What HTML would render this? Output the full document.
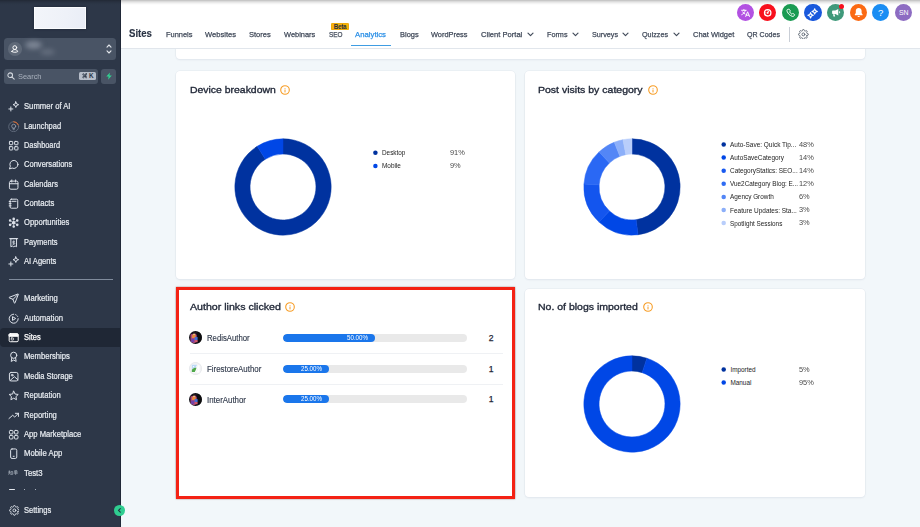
<!DOCTYPE html>
<html>
<head>
<meta charset="utf-8">
<title>Sites - Analytics</title>
<style>
*{box-sizing:border-box;margin:0;padding:0}
html,body{width:920px;height:527px;overflow:hidden;background:#f2f7fa;font-family:"Liberation Sans",sans-serif;}
body{position:relative}
.abs{position:absolute}
/* ---------- sidebar ---------- */
#side{position:absolute;left:0;top:0;width:120.7px;height:527px;background:#2d3748;overflow:hidden;z-index:4;border-right:.9px solid #202837}
#logo{position:absolute;left:34.2px;top:7.4px;width:51.9px;height:21.6px;background:linear-gradient(100deg,#f3f5fa 0%,#eef1f8 60%,#e9edf6 100%);box-shadow:inset 0 0 0 .7px #fff,0 0 2.5px rgba(10,15,30,.45)}
#acct{position:absolute;left:4.1px;top:37.9px;width:112.1px;height:22px;border-radius:3.5px;background:#495465}
#acct .av{position:absolute;left:4.1px;top:4.3px;width:13.6px;height:13.6px;border-radius:50%;background:#5f6978}
#search{position:absolute;left:4.1px;top:68.5px;width:94px;height:15.3px;border-radius:3px;background:#495465}
#search .t{position:absolute;left:13.6px;top:3.1px;font-size:7.8px;color:#aab2be;line-height:10px;transform-origin:0 50%;transform:scaleX(.95)}
#search .k{position:absolute;left:75.4px;top:3.3px;width:16.3px;height:8.7px;border-radius:1.5px;background:#b6bdc9;font-size:6.4px;font-weight:bold;color:#2d3748;line-height:8.9px;text-align:center;letter-spacing:.1px;white-space:nowrap}
#bolt{position:absolute;left:101.2px;top:68.5px;width:15px;height:15.3px;border-radius:3px;background:#495465}
.mi{position:absolute;left:0;width:120px;height:19px}
.mi.act{background:#1f2735;border-radius:4px 0 0 4px}
.mi span{transform-origin:0 50%;position:absolute;left:23.7px;top:4.5px;font-size:8.3px;line-height:10px;color:#e9edf2;white-space:nowrap;-webkit-text-stroke:.2px #e9edf2}
.mi svg{position:absolute;left:8.2px;top:4.6px;width:11.4px;height:11.4px;fill:none;stroke:#dde2ea;stroke-width:2.1;stroke-linecap:round;stroke-linejoin:round}
#sfoot{position:absolute;left:0;top:490.6px;width:120px;height:37px;background:#2d3748}
.mi em{position:absolute;left:8.5px;top:6px;font-size:5px;line-height:7px;font-style:normal;color:#c5ccd6;letter-spacing:0;font-weight:bold}
#sdiv{position:absolute;left:9px;top:278.9px;width:103.5px;height:1.4px;background:#808b9c}
#collapse{position:absolute;left:114px;top:505.2px;width:10.8px;height:10.8px;border-radius:50%;background:#2fcd90;z-index:5}
/* ---------- header ---------- */
#hdr{z-index:3;position:absolute;left:120px;top:0;width:800px;height:48.5px;background:#fff;border-bottom:1.4px solid #e1e6ec}
#topshadow{position:absolute;left:0;top:0;width:920px;height:5px;background:linear-gradient(to bottom,rgba(0,0,0,.26),rgba(0,0,0,.12) 35%,rgba(0,0,0,.03) 75%,rgba(0,0,0,0));z-index:9}
#hdr .ttl{transform-origin:0 50%;position:absolute;left:9.2px;top:27px;font-size:10.4px;font-weight:bold;color:#2a3344;line-height:14px;-webkit-text-stroke:.15px #2a3344}
.tab{transform-origin:0 50%;position:absolute;top:29.9px;font-size:8.1px;line-height:10px;color:#3f4858;white-space:nowrap;-webkit-text-stroke:.25px #3f4858}
.tab.on{color:#2a8fe6;-webkit-text-stroke:.25px #2a8fe6}
.chev{position:absolute;top:31.6px;width:7px;height:5px}
.ic{position:absolute;top:3.5px;width:17.4px;height:17.4px;border-radius:50%}
.ic svg{position:absolute;left:0;top:0;width:17.4px;height:17.4px}
.beta{position:absolute;left:210.7px;top:23.1px;width:18.7px;height:6.8px;border-radius:1.6px;background:#f9b40c;box-shadow:inset 0 0 0 .5px #e3a008;font-size:6.3px;line-height:7px;color:#27303f;text-align:center;font-weight:bold;letter-spacing:-.25px}
.uline{position:absolute;left:231px;top:44.9px;width:39.6px;height:1.5px;background:#3f9de3}
.vdiv{position:absolute;left:669.0px;top:27px;width:1px;height:15px;background:#c9ced6}
.gear{position:absolute;left:678.2px;top:28.7px;width:10.8px;height:10.8px;fill:none;stroke:#5d6673;stroke-width:2.1;stroke-linecap:round;stroke-linejoin:round}
.rdot{position:absolute;left:12px;top:0;width:5.4px;height:5.4px;border-radius:50%;background:#f8101d;display:block}
/* ---------- cards ---------- */
.card{position:absolute;background:#fff;border-radius:4px;box-shadow:0 0 0 .6px #e3e9ef,0 1px 2px rgba(20,40,80,.08)}
.ct{transform-origin:0 50%;position:absolute;margin-top:.3px;margin-left:-.1px;font-size:9.9px;line-height:14px;color:#1f2636;white-space:nowrap;-webkit-text-stroke:.35px #1f2636}
.info{position:absolute;width:10px;height:10px}
.lg{transform-origin:0 50%;position:absolute;margin-top:.6px;font-size:6.4px;line-height:8px;color:#1c1c1c;white-space:nowrap}
.pc{transform-origin:0 50%;transform:scaleX(.95);margin-top:-.5px;position:absolute;font-size:7.8px;line-height:9px;color:#4a4a4a;white-space:nowrap}
.dot{position:absolute;width:4.4px;height:4.4px;border-radius:50%;display:block}
.nm{transform-origin:0 50%;position:absolute;margin-top:.8px;-webkit-text-stroke:.15px #333c4d;font-size:8.4px;line-height:10px;color:#333c4d;white-space:nowrap}
.bar{position:absolute;left:283.2px;width:184px;height:8px;border-radius:4px;background:#e9e9e9;overflow:hidden}
.bar i{position:absolute;left:0;top:0;height:100%;border-radius:4px;background:#1a76eb;display:block}
.bar b{position:absolute;top:0;font-size:6.5px;line-height:8.2px;color:#fff;font-weight:normal;white-space:nowrap;transform-origin:0 50%;transform:scaleX(.952)}
.val{position:absolute;left:488.8px;font-size:8.6px;line-height:12px;color:#1f2636;-webkit-text-stroke:.25px #1f2636}
.sep{position:absolute;left:189.5px;width:313.5px;height:1px;background:#eff1f4}
.avt{position:absolute;left:189.1px;width:13.2px;height:13.2px;border-radius:50%;overflow:hidden}
.donut{position:absolute;width:100px;height:100px}
#red{position:absolute;left:176px;top:286.7px;width:339.1px;height:212.1px;border:3.2px solid #f42214;box-shadow:0 0 1.5px rgba(90,20,10,.55)}
.avt svg{display:block;width:100%;height:100%}
.blob{position:absolute;display:block;border-radius:50%;background:#7c8594;filter:blur(2.5px)}
</style>
</head>
<body>
<!-- HEADER -->
<div id="hdr">
  <div class="ttl" style="transform:scaleX(0.924);">Sites</div>
  <div class="tab" style="transform:scaleX(0.92);left:45.7px">Funnels</div>
  <div class="tab" style="transform:scaleX(0.935);left:85.2px">Websites</div>
  <div class="tab" style="transform:scaleX(0.931);left:129.1px">Stores</div>
  <div class="tab" style="transform:scaleX(0.919);left:163.9px">Webinars</div>
  <div class="tab" style="transform:scaleX(0.79);left:208.7px">SEO</div>
  <div class="beta">Beta</div>
  <div class="tab on" style="transform:scaleX(0.957);left:235.2px">Analytics</div>
  <div class="uline"></div>
  <div class="tab" style="transform:scaleX(0.923);left:279.6px">Blogs</div>
  <div class="tab" style="transform:scaleX(0.915);left:311.3px">WordPress</div>
  <div class="tab" style="transform:scaleX(0.937);left:360.9px">Client Portal</div>
  <svg class="chev" style="left:406.9px" viewBox="0 0 7 5"><path d="M1 1.2L3.5 3.7 6 1.2" fill="none" stroke="#434c5b" stroke-width="1.2" stroke-linecap="round" stroke-linejoin="round"/></svg>
  <div class="tab" style="transform:scaleX(0.894);left:426.5px">Forms</div>
  <svg class="chev" style="left:451.7px" viewBox="0 0 7 5"><path d="M1 1.2L3.5 3.7 6 1.2" fill="none" stroke="#434c5b" stroke-width="1.2" stroke-linecap="round" stroke-linejoin="round"/></svg>
  <div class="tab" style="transform:scaleX(0.892);left:471.7px">Surveys</div>
  <svg class="chev" style="left:502.2px" viewBox="0 0 7 5"><path d="M1 1.2L3.5 3.7 6 1.2" fill="none" stroke="#434c5b" stroke-width="1.2" stroke-linecap="round" stroke-linejoin="round"/></svg>
  <div class="tab" style="transform:scaleX(0.892);left:522.2px">Quizzes</div>
  <svg class="chev" style="left:553px" viewBox="0 0 7 5"><path d="M1 1.2L3.5 3.7 6 1.2" fill="none" stroke="#434c5b" stroke-width="1.2" stroke-linecap="round" stroke-linejoin="round"/></svg>
  <div class="tab" style="transform:scaleX(0.927);left:572.6px">Chat Widget</div>
  <div class="tab" style="transform:scaleX(0.873);left:627.0px">QR Codes</div>
  <div class="vdiv"></div>
  <svg class="gear" viewBox="0 0 24 24"><circle cx="12" cy="12" r="3.2"/><path d="M19.4 15a1.65 1.65 0 0 0 .33 1.82l.06.06a2 2 0 1 1-2.83 2.83l-.06-.06a1.65 1.65 0 0 0-1.82-.33 1.65 1.65 0 0 0-1 1.51V21a2 2 0 1 1-4 0v-.09A1.65 1.65 0 0 0 9 19.4a1.65 1.65 0 0 0-1.82.33l-.06.06a2 2 0 1 1-2.83-2.83l.06-.06a1.65 1.65 0 0 0 .33-1.82 1.65 1.65 0 0 0-1.51-1H3a2 2 0 1 1 0-4h.09A1.65 1.65 0 0 0 4.6 9a1.65 1.65 0 0 0-.33-1.82l-.06-.06a2 2 0 1 1 2.83-2.83l.06.06a1.65 1.65 0 0 0 1.82.33H9a1.65 1.65 0 0 0 1-1.51V3a2 2 0 1 1 4 0v.09a1.65 1.65 0 0 0 1 1.51 1.65 1.65 0 0 0 1.82-.33l.06-.06a2 2 0 1 1 2.83 2.83l-.06.06a1.65 1.65 0 0 0-.33 1.82V9a1.65 1.65 0 0 0 1.51 1H21a2 2 0 1 1 0 4h-.09a1.65 1.65 0 0 0-1.51 1z"/></svg>
  <!-- round action icons -->
  <div class="ic" style="left:616.5px;background:#b251e2"><svg viewBox="0 0 17.4 17.4" fill="none" stroke="#fff" stroke-width=".95" stroke-linecap="round" stroke-linejoin="round"><path d="M4.6 6.3h4.6M6.9 5.5v.8M8.3 6.4c-.5 2-1.7 3.4-3.6 4.3M5.7 7.9c.6 1 1.4 1.7 2.4 2.2M8.7 12.5l1.9-4.7 1.9 4.7M9.3 11.2h2.6"/></svg></div>
  <div class="ic" style="left:639.1px;background:#f8101d"><svg viewBox="0 0 17.4 17.4" fill="none" stroke="#fff" stroke-linecap="round"><circle cx="8.7" cy="8.8" r="3.2" stroke-width="1.3"/><path d="M8.7 8.8l1.5-2" stroke-width="1"/><path d="M6.6 8.8h.5M8.7 6.7v.4" stroke-width=".8"/><circle cx="8.7" cy="8.9" r=".9" fill="#fff" stroke="none"/></svg></div>
  <div class="ic" style="left:661.8px;background:#1a9b52"><svg viewBox="0 0 17.4 17.4" fill="none" stroke="#fff" stroke-width=".95" stroke-linecap="round" stroke-linejoin="round"><path d="M6.4 5.3c.3-.3.8-.3 1 .1l.8 1.2c.2.3.1.6-.1.8l-.5.5c.5 1 1.3 1.8 2.3 2.3l.5-.5c.2-.2.6-.3.8-.1l1.2.8c.4.2.4.7.1 1l-.5.5c-.5.5-1.2.7-1.9.4-2.4-.9-4.1-2.6-5-5-.3-.7-.1-1.4.4-1.9z"/></svg></div>
  <div class="ic" style="left:684.3px;background:#1958dc"><svg viewBox="0 0 17.4 17.4" fill="none" stroke="#fff" stroke-width="1.1" stroke-linejoin="round"><path d="M10.7 4.7l.8 1.9 1.9.8-1.9.8-.8 1.9-.8-1.9-1.9-.8 1.9-.8z"/><path d="M6.6 8.6l.8 1.9 1.9.8-1.9.8-.8 1.9-.8-1.9-1.9-.8 1.9-.8z"/></svg></div>
  <div class="ic" style="left:706.8px;background:#3f997a"><svg viewBox="0 0 17.4 17.4" fill="#fff" stroke="none"><path d="M11.3 4.9v6.6l-3-1.5H6.1c-.6 0-1-.4-1-1V7.4c0-.6.4-1 1-1h2.2z"/><path d="M6 10.3h1.6l.5 2.3H6.5z"/><path d="M12.2 6.9c.7.3 1 .8 1 1.3s-.3 1-1 1.3z"/></svg><i class="rdot"></i></div>
  <div class="ic" style="left:729.6px;background:#fb6a14"><svg viewBox="0 0 17.4 17.4" fill="#fff" stroke="none"><path d="M8.7 3.9c-1.7 0-2.9 1.3-2.9 2.9v2.1l-1 1.7c-.2.3 0 .7.4.7h7c.4 0 .6-.4.4-.7l-1-1.7V6.8c0-1.6-1.2-2.9-2.9-2.9z"/><path d="M7.5 11.9c.1.7.6 1.1 1.2 1.1s1.1-.4 1.2-1.1z"/></svg></div>
  <div class="ic" style="left:752px;background:#1a8df3"><svg viewBox="0 0 17.4 17.4"><text x="8.7" y="11.9" text-anchor="middle" font-family="Liberation Sans, sans-serif" font-size="9.6" fill="#fff">?</text></svg></div>
  <div class="ic" style="left:774.8px;background:#8d6cc2"><svg viewBox="0 0 17.4 17.4"><text x="8.7" y="11.5" text-anchor="middle" font-family="Liberation Sans, sans-serif" font-size="8" fill="#fff" textLength="9.6" lengthAdjust="spacingAndGlyphs">SN</text></svg></div>
</div>
<!-- SIDEBAR -->
<div id="side">
  <div id="logo"></div>
  <div id="acct"><div class="av"><svg viewBox="0 0 13.6 13.6" style="position:absolute;left:0;top:0;width:13.6px;height:13.6px" fill="none" stroke="#fff" stroke-width=".95" stroke-linecap="round" stroke-linejoin="round"><circle cx="6.8" cy="5.6" r="1.9"/><path d="M3.9 9.6c.3-1.3 1.4-2 2.9-2s2.6.7 2.9 2c-.8.5-1.8.7-2.9.7s-2.1-.2-2.9-.7z"/></svg></div><i class="blob" style="left:21px;top:3.2px;width:17px;height:8px"></i><i class="blob" style="left:36px;top:11.5px;width:15px;height:6px;opacity:.55"></i><svg viewBox="0 0 8 12" style="position:absolute;left:100.6px;top:4.8px;width:8px;height:12px" fill="none" stroke="#e3e7ec" stroke-width="1" stroke-linecap="round" stroke-linejoin="round"><path d="M2 4.1L4 2l2 2.1M2 7.9L4 10l2-2.1" stroke-width="1.1"/></svg></div>
  <div id="search"><svg viewBox="0 0 10 10" style="position:absolute;left:3.2px;top:3.6px;width:8px;height:8px" fill="none" stroke="#d3d8df" stroke-width="1.3" stroke-linecap="round"><circle cx="4" cy="4" r="2.9"/><path d="M6.3 6.3L9 9"/></svg><div class="t">Search</div><div class="k"><svg viewBox="0 0 24 24" style="position:absolute;left:2.2px;top:1.6px;width:5.6px;height:5.6px" fill="none" stroke="#2d3748" stroke-width="3.2" stroke-linecap="round" stroke-linejoin="round"><path d="M18 3a3 3 0 0 0-3 3v12a3 3 0 0 0 3 3 3 3 0 0 0 3-3 3 3 0 0 0-3-3H6a3 3 0 0 0-3 3 3 3 0 0 0 3 3 3 3 0 0 0 3-3V6a3 3 0 0 0-3-3 3 3 0 0 0-3 3 3 3 0 0 0 3 3h12a3 3 0 0 0 3-3 3 3 0 0 0-3-3z"/></svg><span style="position:absolute;left:9.6px;top:0">K</span></div></div>
  <div id="bolt"><svg viewBox="0 0 10 10" style="position:absolute;left:3.7px;top:3.6px;width:8px;height:8.2px"><path d="M6.3.6L1.6 5.6h3L3.8 9.5l4.7-5.2h-3z" fill="#30d392"/></svg></div>
  <div id="sdiv"></div>
  <!-- group 1 -->
  <div class="mi" style="top:96.5px"><svg viewBox="0 0 24 24"><path d="M6 12.5v8.5M1.8 16.8h8.5"/><path d="M16.5 1.8l1.7 4.2 4.2 1.7-4.2 1.7-1.7 4.2-1.7-4.2-4.2-1.7 4.2-1.7z"/></svg><span style="transform:scaleX(0.925);">Summer of AI</span></div>
  <div class="mi" style="top:116px"><svg viewBox="0 0 24 24"><circle cx="12" cy="12" r="10.5" style="stroke:#6b7587;stroke-width:1.6"/><path d="M12 1.5a10.5 10.5 0 0 1 9.8 6.7" style="stroke:#f0702a;stroke-width:2"/><circle cx="12" cy="11" r="4.2" style="stroke:#9aa3b2;stroke-width:1.6"/><path d="M10.3 16h3.4M10.8 18.3h2.4" style="stroke:#9aa3b2;stroke-width:1.5"/></svg><span style="transform:scaleX(0.903);">Launchpad</span></div>
  <div class="mi" style="top:135.3px"><svg viewBox="0 0 24 24"><rect x="3" y="3" width="7" height="7" rx="1.2"/><rect x="14" y="3" width="7" height="7" rx="1.2"/><rect x="3" y="14" width="7" height="7" rx="1.2"/><rect x="14" y="14" width="7" height="7" rx="1.2"/></svg><span style="transform:scaleX(0.887);">Dashboard</span></div>
  <div class="mi" style="top:154.7px"><svg viewBox="0 0 24 24"><path d="M21 11.5a8.5 8.5 0 0 1-12.3 7.6L3 21l1.9-5.7A8.5 8.5 0 1 1 21 11.5z"/></svg><span style="transform:scaleX(0.911);">Conversations</span></div>
  <div class="mi" style="top:174.1px"><svg viewBox="0 0 24 24"><rect x="3" y="4.5" width="18" height="17" rx="3"/><path d="M3 10h18M8 2v4.5M16 2v4.5"/></svg><span style="transform:scaleX(0.896);">Calendars</span></div>
  <div class="mi" style="top:193.5px"><svg viewBox="0 0 24 24"><rect x="4.5" y="2.5" width="16" height="19" rx="2.5"/><path d="M2.5 7.5h4M2.5 12h4M2.5 16.5h4M9 7h8"/></svg><span style="transform:scaleX(0.925);">Contacts</span></div>
  <div class="mi" style="top:212.8px"><svg viewBox="0 0 24 24" style="stroke-width:2.3"><circle cx="12" cy="12" r="2.6" style="fill:#dde2ea"/><path d="M12 6.5v3M12 14.5v3M7 9.2l2.5 1.400M17 9.2l-2.5 1.400M7 14.800l2.5-1.400M17 14.800l-2.5-1.400" style="stroke-width:1.2"/><circle cx="12" cy="4" r="1.6" style="fill:#dde2ea"/><circle cx="12" cy="20" r="1.6" style="fill:#dde2ea"/><circle cx="4.5" cy="7.5" r="1.6" style="fill:#dde2ea"/><circle cx="19.5" cy="7.5" r="1.6" style="fill:#dde2ea"/><circle cx="4.5" cy="16.5" r="1.6" style="fill:#dde2ea"/><circle cx="19.5" cy="16.5" r="1.6" style="fill:#dde2ea"/></svg><span style="transform:scaleX(0.92);">Opportunities</span></div>
  <div class="mi" style="top:232.2px"><svg viewBox="0 0 24 24"><path d="M5.5 3.5h13M3.5 3.5h17M6 3.5v17l3-1.5 3 1.5 3-1.5 3 1.5v-17"/><path d="M14 9.2h-3a1.4 1.4 0 0 0 0 2.8h2a1.4 1.4 0 0 1 0 2.8h-3M12 8v8" style="stroke-width:1.4"/></svg><span style="transform:scaleX(0.908);">Payments</span></div>
  <div class="mi" style="top:251.6px"><svg viewBox="0 0 24 24"><path d="M6 12.5v8.5M1.8 16.8h8.5"/><path d="M16.5 1.8l1.7 4.2 4.2 1.7-4.2 1.7-1.7 4.2-1.7-4.2-4.2-1.7 4.2-1.7z"/></svg><span style="transform:scaleX(0.912);">AI Agents</span></div>
  <!-- group 2 -->
  <div class="mi" style="top:288.7px"><svg viewBox="0 0 24 24"><path d="M10.5 13.5L21 3M10.6 13.8l2.6 6.8c.2.6.4.9.5.9.2.1.4.1.6 0 .2-.1.3-.4.6-1L21.5 3.4c.2-.5.3-.8.3-1-.1-.2-.2-.3-.4-.4-.2 0-.5.1-1 .3L3.3 8.9c-.6.2-.9.3-1 .5-.1.2-.1.4 0 .6.1.2.4.3.9.5l6.8 2.6"/></svg><span style="transform:scaleX(0.925);">Marketing</span></div>
  <div class="mi" style="top:308.1px"><svg viewBox="0 0 24 24"><path d="M9.5 8.5v7l6-3.5z"/><path d="M21.5 12A9.5 9.5 0 1 1 12 2.5"/><path d="M16 3.4a9.5 9.5 0 0 1 4.6 4.6" style="stroke-dasharray:1.5 3"/></svg><span style="transform:scaleX(0.929);">Automation</span></div>
  <div class="mi act" style="top:327.7px;height:18.9px"><svg viewBox="0 0 24 24" style="stroke:#fff"><rect x="2.5" y="3.5" width="19" height="17" rx="2.5"/><path d="M3 4.5h18v4.5H3z" style="fill:#fff"/><rect x="7" y="12.5" width="4.5" height="4.5" rx=".8" style="stroke-width:1.5"/></svg><span style="transform:scaleX(0.905);color:#fff;-webkit-text-stroke:.25px #fff">Sites</span></div>
  <div class="mi" style="top:346.9px"><svg viewBox="0 0 24 24"><circle cx="12" cy="9" r="6.5"/><path d="M8 14.5L6.8 22l5.2-3 5.2 3L16 14.5"/></svg><span style="transform:scaleX(0.921);">Memberships</span></div>
  <div class="mi" style="top:366.3px"><svg viewBox="0 0 24 24"><rect x="3" y="3" width="18" height="18" rx="3.5"/><circle cx="8.8" cy="8.8" r="1.8"/><path d="M4.5 20l8.8-8 7.7 6.5"/></svg><span style="transform:scaleX(0.904);">Media Storage</span></div>
  <div class="mi" style="top:385.7px"><svg viewBox="0 0 24 24"><path d="M12 2.5l2.9 6 6.6.9-4.8 4.6 1.2 6.5-5.9-3.2-5.9 3.2 1.2-6.5L2.5 9.4l6.6-.9z"/></svg><span style="transform:scaleX(0.912);">Reputation</span></div>
  <div class="mi" style="top:405px"><svg viewBox="0 0 24 24"><path d="M22 7l-8 8-4-4-8 7M22 7h-6.5M22 7v6.5"/></svg><span style="transform:scaleX(0.912);">Reporting</span></div>
  <div class="mi" style="top:424.4px"><svg viewBox="0 0 24 24"><rect x="3" y="3" width="7.5" height="7.5" rx="2"/><rect x="13.5" y="3" width="7.5" height="7.5" rx="2"/><rect x="3" y="13.5" width="7.5" height="7.5" rx="2"/><rect x="13.5" y="13.5" width="7.5" height="7.5" rx="2"/></svg><span style="transform:scaleX(0.92);">App Marketplace</span></div>
  <div class="mi" style="top:443.8px"><svg viewBox="0 0 24 24"><rect x="5.5" y="2" width="13" height="20" rx="3"/><path d="M11 17.5h2"/></svg><span style="transform:scaleX(0.933);">Mobile App</span></div>
  <div class="mi" style="top:463.2px"><svg viewBox="0 0 20 10" style="left:8.4px;top:7.1px;width:10.4px;height:5.2px;stroke:#b9c1cc;stroke-width:1.1;stroke-linecap:butt"><path d="M1 2.500h3.500M2.600 1v3.500M.6 5h4.400M2.800 5L1 9M3 6.500l1.800 2.500M6 3h3v5.500H6z"/><path d="M12 1.500l5.500-.5M11.500 4h7M15 1.500v7.300l-1.300-.6M12.300 2.800l.8 1M17.500 2.500l-.8 1.200M11 6.200h8"/></svg><span style="transform:scaleX(0.937);">Test3</span></div>
  <div class="mi" style="top:482.6px"><i style="position:absolute;left:8.8px;top:6.2px;width:6px;height:1.3px;background:#e4e8ee;border-radius:.6px;display:block"></i><i style="position:absolute;left:24.3px;top:6.7px;width:.9px;height:1px;background:#aab2be;display:block"></i><i style="position:absolute;left:34.9px;top:6.7px;width:.9px;height:1px;background:#aab2be;display:block"></i></div>
  <div id="sfoot"><div class="mi" style="top:9.6px"><svg viewBox="0 0 24 24" style="stroke-width:2.1;width:10.8px;height:10.8px;left:8.5px;top:4.9px"><circle cx="12" cy="12" r="3.2"/><path d="M19.4 15a1.65 1.65 0 0 0 .33 1.82l.06.06a2 2 0 1 1-2.83 2.83l-.06-.06a1.65 1.65 0 0 0-1.82-.33 1.65 1.65 0 0 0-1 1.51V21a2 2 0 1 1-4 0v-.09A1.65 1.65 0 0 0 9 19.4a1.65 1.65 0 0 0-1.82.33l-.06.06a2 2 0 1 1-2.83-2.83l.06-.06a1.65 1.65 0 0 0 .33-1.82 1.65 1.65 0 0 0-1.51-1H3a2 2 0 1 1 0-4h.09A1.65 1.65 0 0 0 4.6 9a1.65 1.65 0 0 0-.33-1.82l-.06-.06a2 2 0 1 1 2.83-2.83l.06.06a1.65 1.65 0 0 0 1.82.33H9a1.65 1.65 0 0 0 1-1.51V3a2 2 0 1 1 4 0v.09a1.65 1.65 0 0 0 1 1.51 1.65 1.65 0 0 0 1.82-.33l.06-.06a2 2 0 1 1 2.83 2.83l-.06.06a1.65 1.65 0 0 0-.33 1.82V9a1.65 1.65 0 0 0 1.51 1H21a2 2 0 1 1 0 4h-.09a1.65 1.65 0 0 0-1.51 1z"/></svg><span style="transform:scaleX(0.91);">Settings</span></div></div>
</div>
<div id="collapse"><svg viewBox="0 0 10.8 10.8" style="position:absolute;left:0;top:0;width:10.8px;height:10.8px" fill="none" stroke="#243042" stroke-width="1.1" stroke-linecap="round" stroke-linejoin="round"><path d="M6.3 3.6L4.5 5.4l1.8 1.8"/></svg></div>
<div id="topshadow"></div>
<!-- CARDS -->
<div class="card" style="left:176px;top:40px;width:688.5px;height:18.5px"></div>
<div class="card" style="left:176px;top:71px;width:339.2px;height:208px"></div>
<div class="card" style="left:525px;top:71px;width:339.5px;height:208px"></div>
<div class="card" style="left:176px;top:288.5px;width:339.2px;height:208px"></div>
<div class="card" style="left:525px;top:288.5px;width:339.5px;height:208px"></div>
<!-- card 1 : Device breakdown -->
<div class="ct" style="transform:scaleX(1.056);left:189.6px;top:83px">Device breakdown</div>
<svg class="info" style="left:279.8px;top:84.7px" viewBox="0 0 20 20"><circle cx="10" cy="10" r="8.6" fill="none" stroke="#f79d26" stroke-width="2.2"/><circle cx="10" cy="7.6" r="1.25" fill="#f79d26"/><path d="M10 10.6v3.4" stroke="#f79d26" stroke-width="2" stroke-linecap="round"/></svg>
<svg class="donut" style="left:232.8px;top:136.6px" viewBox="-50 -50 100 100">
  <path d="M0.00 -48.15A48.15 48.15 0 1 1 -25.80 -40.65L-17.66 -27.82A32.95 32.95 0 1 0 0.00 -32.95Z" fill="#00329f" stroke="#00329f" stroke-width=".5" stroke-linejoin="round"/>
  <path d="M-25.80 -40.65A48.15 48.15 0 0 1 -0.00 -48.15L-0.00 -32.95A32.95 32.95 0 0 0 -17.66 -27.82Z" fill="#0047e6" stroke="#0047e6" stroke-width=".5" stroke-linejoin="round"/>
</svg>
<div class="lg" style="transform:scaleX(0.998);left:381.7px;top:148.9px">Desktop</div><div class="pc" style="left:450.4px;top:148.6px">91%</div>
<div class="lg" style="transform:scaleX(1.004);left:381.7px;top:161.3px">Mobile</div><div class="pc" style="left:450.4px;top:161.7px">9%</div>

<!-- card 2 : Post visits by category -->
<div class="ct" style="transform:scaleX(1.065);left:538.5px;top:83px">Post visits by category</div>
<svg class="info" style="left:647.7px;top:84.7px" viewBox="0 0 20 20"><circle cx="10" cy="10" r="8.6" fill="none" stroke="#f79d26" stroke-width="2.2"/><circle cx="10" cy="7.6" r="1.25" fill="#f79d26"/><path d="M10 10.6v3.4" stroke="#f79d26" stroke-width="2" stroke-linecap="round"/></svg>
<svg class="donut" style="left:582.2px;top:137px" viewBox="-50 -50 100 100">
  <path d="M0.00 -48.15A48.15 48.15 0 0 1 6.03 47.77L4.13 32.69A32.95 32.95 0 0 0 0.00 -32.95Z" fill="#00329f" stroke="#00329f" stroke-width=".5" stroke-linejoin="round"/>
  <path d="M6.03 47.77A48.15 48.15 0 0 1 -32.96 35.10L-22.56 24.02A32.95 32.95 0 0 0 4.13 32.69Z" fill="#0047e6" stroke="#0047e6" stroke-width=".5" stroke-linejoin="round"/>
  <path d="M-32.96 35.10A48.15 48.15 0 0 1 -48.05 -3.02L-32.88 -2.07A32.95 32.95 0 0 0 -22.56 24.02Z" fill="#1355ee" stroke="#1355ee" stroke-width=".5" stroke-linejoin="round"/>
  <path d="M-48.05 -3.02A48.15 48.15 0 0 1 -32.96 -35.10L-22.56 -24.02A32.95 32.95 0 0 0 -32.88 -2.07Z" fill="#2a68f4" stroke="#2a68f4" stroke-width=".5" stroke-linejoin="round"/>
  <path d="M-32.96 -35.10A48.15 48.15 0 0 1 -17.73 -44.77L-12.13 -30.64A32.95 32.95 0 0 0 -22.56 -24.02Z" fill="#5386f6" stroke="#5386f6" stroke-width=".5" stroke-linejoin="round"/>
  <path d="M-17.73 -44.77A48.15 48.15 0 0 1 -9.02 -47.30L-6.17 -32.37A32.95 32.95 0 0 0 -12.13 -30.64Z" fill="#8caff9" stroke="#8caff9" stroke-width=".5" stroke-linejoin="round"/>
  <path d="M-9.02 -47.30A48.15 48.15 0 0 1 -0.00 -48.15L-0.00 -32.95A32.95 32.95 0 0 0 -6.17 -32.37Z" fill="#b9cefb" stroke="#b9cefb" stroke-width=".5" stroke-linejoin="round"/>
</svg>
<div class="lg" style="transform:scaleX(1.013);left:730.4px;top:140.6px">Auto-Save: Quick Tip...</div><div class="pc" style="left:799.3px;top:140.3px">48%</div>
<div class="lg" style="transform:scaleX(1.005);left:730.4px;top:153.7px">AutoSaveCategory</div><div class="pc" style="left:799.3px;top:153.4px">14%</div>
<div class="lg" style="transform:scaleX(1.003);left:730.4px;top:166.8px">CategoryStatics: SEO...</div><div class="pc" style="left:799.3px;top:166.5px">14%</div>
<div class="lg" style="transform:scaleX(0.997);left:730.4px;top:179.9px">Vue2Category Blog: E...</div><div class="pc" style="left:799.3px;top:179.6px">12%</div>
<div class="lg" style="transform:scaleX(1.002);left:730.4px;top:192.3px">Agency Growth</div><div class="pc" style="left:799.3px;top:192.7px">6%</div>
<div class="lg" style="transform:scaleX(1.011);left:730.4px;top:206.1px">Feature Updates: Sta...</div><div class="pc" style="left:799.3px;top:205.8px">3%</div>
<div class="lg" style="transform:scaleX(0.995);left:730.4px;top:219.2px">Spotlight Sessions</div><div class="pc" style="left:799.3px;top:218.9px">3%</div>

<!-- card 3 : Author links clicked -->
<div class="ct" style="transform:scaleX(1.075);left:189.6px;top:300px">Author links clicked</div>
<svg class="info" style="left:284.9px;top:301.7px" viewBox="0 0 20 20"><circle cx="10" cy="10" r="8.6" fill="none" stroke="#f79d26" stroke-width="2.2"/><circle cx="10" cy="7.6" r="1.25" fill="#f79d26"/><path d="M10 10.6v3.4" stroke="#f79d26" stroke-width="2" stroke-linecap="round"/></svg>
<div class="avt face" style="top:331.3px"><svg viewBox="0 0 26 26"><defs><filter id="fb1" x="-10%" y="-10%" width="120%" height="120%"><feGaussianBlur stdDeviation=".9"/></filter></defs><rect width="26" height="26" fill="#100f16"/><g filter="url(#fb1)"><path d="M3 7l9-3 3 4 1 13-6 3-7-3z" fill="#b0487c"/><path d="M6 8h7v6H6z" fill="#e8893a"/><path d="M8 5h4v3H8z" fill="#ecc773"/><path d="M11 12h6v6h-6z" fill="#426fd8"/><path d="M4 15h6v7H4z" fill="#7342a8"/><path d="M12 18h5v4h-5z" fill="#d45a6a"/><path d="M16 2h9v22h-6l-1-12z" fill="#0c0b11"/><path d="M5 2h12l-1 3H7z" fill="#1a141d"/></g></svg></div>
<div class="nm" style="transform:scaleX(0.926);left:206.9px;top:332.3px">RedisAuthor</div>
<div class="bar" style="top:334px"><i style="width:92.3px"></i><b style="left:63.7px">50.00%</b></div>
<div class="val" style="top:332px">2</div>
<div class="sep" style="top:353px"></div>
<div class="avt broken" style="top:362px"><svg viewBox="0 0 26 26"><rect width="26" height="26" fill="#f0f1f3"/><circle cx="13" cy="13" r="12.4" fill="none" stroke="#dfe2e6" stroke-width="1.2"/><path d="M5.5 5.5h15v15h-15z" fill="#fff"/><path d="M5.5 5.5h10.5l-3 6-7.5 3z" fill="#bcd9f6"/><circle cx="9" cy="9" r="1.3" fill="#fff"/><path d="M5.5 19.5v-4c3-3 6-4.5 10-4.5l-4 8.5z" fill="#4fa84a"/><path d="M18.5 5.5l2 2v13h-7l3-6-2.5-2.5z" fill="#fff"/><path d="M14 20.5l3-6-2.5-2.5 3.5-6.5" fill="none" stroke="#d9dce0" stroke-width=".6"/></svg></div>
<div class="nm" style="transform:scaleX(0.941);left:206.9px;top:363.6px">FirestoreAuthor</div>
<div class="bar" style="top:364.6px"><i style="width:46.2px"></i><b style="left:17.6px">25.00%</b></div>
<div class="val" style="top:362.6px">1</div>
<div class="sep" style="top:383.8px"></div>
<div class="avt face" style="top:392.6px"><svg viewBox="0 0 26 26"><defs><filter id="fb2" x="-10%" y="-10%" width="120%" height="120%"><feGaussianBlur stdDeviation=".9"/></filter></defs><rect width="26" height="26" fill="#100f16"/><g filter="url(#fb2)"><path d="M3 7l9-3 3 4 1 13-6 3-7-3z" fill="#b0487c"/><path d="M6 8h7v6H6z" fill="#e8893a"/><path d="M8 5h4v3H8z" fill="#ecc773"/><path d="M11 12h6v6h-6z" fill="#426fd8"/><path d="M4 15h6v7H4z" fill="#7342a8"/><path d="M12 18h5v4h-5z" fill="#d45a6a"/><path d="M16 2h9v22h-6l-1-12z" fill="#0c0b11"/><path d="M5 2h12l-1 3H7z" fill="#1a141d"/></g></svg></div>
<div class="nm" style="transform:scaleX(0.941);left:206.9px;top:394.3px">InterAuthor</div>
<div class="bar" style="top:395.3px"><i style="width:46.2px"></i><b style="left:17.6px">25.00%</b></div>
<div class="val" style="top:393.3px">1</div>

<!-- card 4 : No. of blogs imported -->
<div class="ct" style="transform:scaleX(1.063);left:538.5px;top:300px">No. of blogs imported</div>
<svg class="info" style="left:642.9px;top:301.7px" viewBox="0 0 20 20"><circle cx="10" cy="10" r="8.6" fill="none" stroke="#f79d26" stroke-width="2.2"/><circle cx="10" cy="7.6" r="1.25" fill="#f79d26"/><path d="M10 10.6v3.4" stroke="#f79d26" stroke-width="2" stroke-linecap="round"/></svg>
<svg class="donut" style="left:582.2px;top:353.8px" viewBox="-50 -50 100 100">
  <path d="M0.00 -48.15A48.15 48.15 0 0 1 14.88 -45.79L10.18 -31.34A32.95 32.95 0 0 0 0.00 -32.95Z" fill="#00329f" stroke="#00329f" stroke-width=".5" stroke-linejoin="round"/>
  <path d="M14.88 -45.79A48.15 48.15 0 1 1 -0.00 -48.15L-0.00 -32.95A32.95 32.95 0 1 0 10.18 -31.34Z" fill="#0047e6" stroke="#0047e6" stroke-width=".5" stroke-linejoin="round"/>
</svg>
<div class="lg" style="left:730.4px;top:365.6px">Imported</div><div class="pc" style="left:799.3px;top:365.3px">5%</div>
<div class="lg" style="left:730.4px;top:378.7px">Manual</div><div class="pc" style="left:799.3px;top:378.4px">95%</div>

<svg style="position:absolute;left:0;top:0;width:920px;height:527px;pointer-events:none" viewBox="0 0 920 527"><circle cx="375.4" cy="152.8" r="2.25" fill="#00329f"/><circle cx="375.4" cy="165.9" r="2.25" fill="#0047e6"/><circle cx="723.7" cy="144.5" r="2.25" fill="#00329f"/><circle cx="723.7" cy="157.6" r="2.25" fill="#0047e6"/><circle cx="723.7" cy="170.7" r="2.25" fill="#195af0"/><circle cx="723.7" cy="183.8" r="2.25" fill="#2f6cf3"/><circle cx="723.7" cy="196.9" r="2.25" fill="#5386f6"/><circle cx="723.7" cy="210" r="2.25" fill="#8caff9"/><circle cx="723.7" cy="223.1" r="2.25" fill="#b9cefb"/><circle cx="723.7" cy="369.5" r="2.25" fill="#00329f"/><circle cx="723.7" cy="382.6" r="2.25" fill="#0047e6"/></svg>
<!-- red highlight -->
<div id="red"></div>
</body>
</html>
